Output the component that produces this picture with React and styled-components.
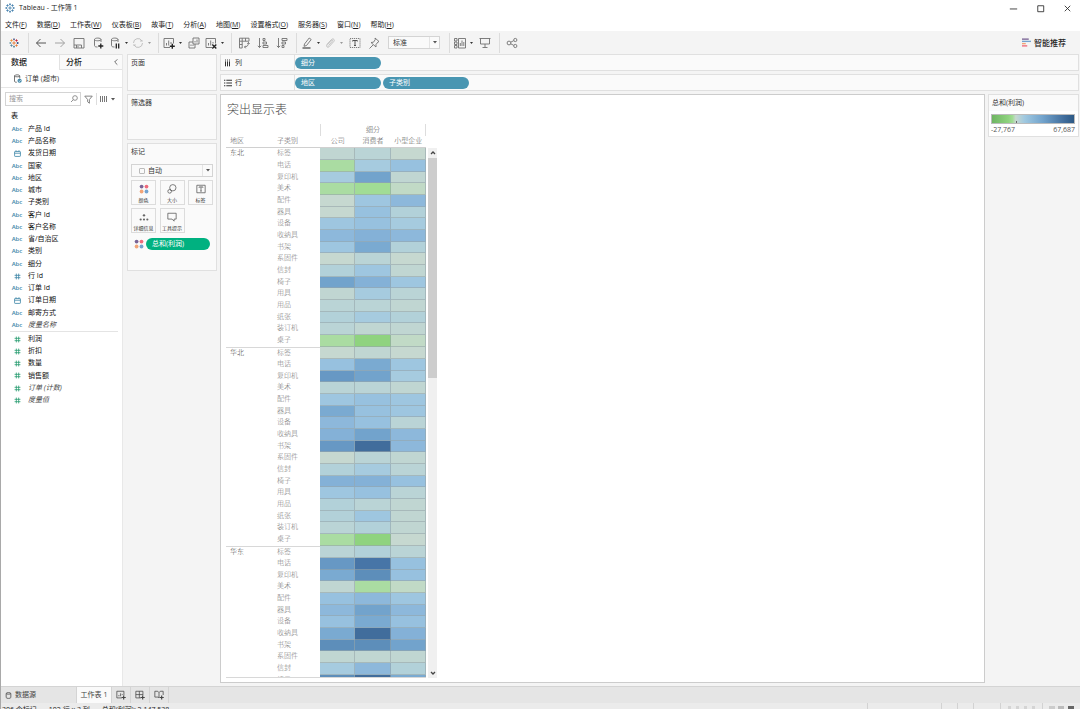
import { useState } from "react";
import styled, { createGlobalStyle, css } from "styled-components";

const GlobalStyle = createGlobalStyle`
    * {
        box-sizing: border-box;
    }

    body {
        margin: 0;
        background: #f4f4f4;
        color: #222;
        font-family: "Open Sans", "Noto Sans CJK SC", sans-serif;
        font-size: 7px;
        line-height: 12px;
    }

    button, input, select {
        background: none;
        border: 0;
        color: inherit;
        font: inherit;
        margin: 0;
        padding: 0;
    }

    h1, h2 {
        font: inherit;
        margin: 0;
    }

    svg {
        display: block;
        flex: none;
    }
`;

const Page = styled.div`
    border-left: 1px solid #a9a9a9;
    display: flex;
    flex-direction: column;
    height: 100vh;
    overflow: hidden;
`;

const TitleBar = styled.header`
    align-items: center;
    background: #fff;
    display: flex;
    gap: 4px;
    padding: 2px 7px 3px 4px;
`;

const WindowButtons = styled.div`
    display: flex;
    gap: 16px;
    margin-left: auto;
`;

const MenuBar = styled.nav`
    background: #fff;
    display: flex;
    gap: 10px;
    padding: 2px 4px 0;
`;

const Toolbar = styled.div`
    align-items: center;
    display: flex;
    height: 23px;
    padding: 0 14px 0 4px;
`;

const ToolButton = styled.button`
    align-items: center;
    color: ${(props) => (props.$faded ? "#bbb" : "#707070")};
    display: flex;
    flex: none;
    height: 18px;
    justify-content: center;
    margin-right: 1px;
    width: 18px;
`;

const DropButton = styled(ToolButton)`
    gap: 4px;
    justify-content: flex-start;
    margin: 0;
    padding-left: 1px;
    width: 23px;
`;

const ToolSeparator = styled.span`
    border-left: 1px solid #dcdcdc;
    height: 20px;
    margin: 0 3px 0 4px;
`;

const SelectWrap = styled.label`
    align-items: center;
    background: #fafafa;
    border: 1px solid #d4d4d4;
    color: #333;
    display: flex;
    height: 13px;
    position: relative;
    ${(props) => props.$toolbar && css`
        margin: 0 5px 0 4px;
        width: 52px;
    `}

    select {
        appearance: none;
        flex: 1;
        height: 11px;
        line-height: 10px;
        min-width: 0;
        outline: none;
        padding-left: ${(props) => (props.$toolbar ? "4px" : "16px")};
    }
`;

const SelectArrow = styled.span`
    align-items: center;
    border-left: 1px solid #e4e4e4;
    display: flex;
    height: 11px;
    justify-content: center;
    pointer-events: none;
    position: absolute;
    right: 0;
    width: 10px;
`;

const SelectMark = styled.span`
    border: 1px solid #bbb;
    border-radius: 1px;
    height: 6px;
    left: 7px;
    pointer-events: none;
    position: absolute;
    width: 6px;
`;

const ShowMe = styled.button`
    align-items: center;
    display: flex;
    font-size: 8px;
    font-weight: 500;
    gap: 3px;
    margin-left: auto;
`;

const Workspace = styled.div`
    display: flex;
    flex: 1;
    min-height: 0;
`;

const Sidebar = styled.aside`
    background: #fff;
    border-right: 1px solid #e8e8e8;
    flex: none;
    width: 122px;
`;

const SideTabs = styled.div`
    display: flex;
`;

const SideTab = styled.button`
    background: ${(props) => (props.$active ? "#fff" : "#fafafa")};
    border-bottom: 1px solid ${(props) => (props.$active ? "#fff" : "#e2e2e2")};
    border-left: 1px solid ${(props) => (props.$active ? "#fff" : "#e2e2e2")};
    border-top: 1px solid #e2e2e2;
    flex: ${(props) => (props.$active ? "none" : 1)};
    font-size: 8px;
    font-weight: 500;
    height: 16px;
    padding: ${(props) => (props.$active ? "0 0 0 9px" : "0 0 0 6px")};
    text-align: left;
    width: 58px;
`;

const CollapseButton = styled.button`
    align-items: center;
    background: #fafafa;
    border-bottom: 1px solid #e2e2e2;
    border-top: 1px solid #e2e2e2;
    color: #555;
    display: flex;
    justify-content: center;
    width: 12px;
`;

const DataSource = styled.div`
    align-items: center;
    border-bottom: 1px solid #e6e6e6;
    color: #333;
    display: flex;
    gap: 3px;
    height: 18px;
    padding-left: 12px;
`;

const SearchRow = styled.div`
    align-items: center;
    color: #777;
    display: flex;
    gap: 3px;
    padding: 4px 6px 4px 4px;
`;

const SearchBox = styled.label`
    align-items: center;
    border: 1px solid #d4d4d4;
    display: flex;
    height: 14px;
    padding: 0 2px 0 3px;
    width: 76px;

    input {
        flex: 1;
        min-width: 0;
        outline: none;
    }

    input::placeholder {
        color: #999;
    }
`;

const SmallButton = styled.button`
    align-items: center;
    display: flex;
    justify-content: center;

    & + & {
        border-left: 1px solid #ddd;
        height: 12px;
        padding-left: 3px;
    }
`;

const TableTitle = styled.h2`
    font-weight: 500;
    padding: 0 10px 1px;
`;

const FieldList = styled.ul`
    list-style: none;
    margin: 0 4px 0 9px;
    padding: 0;

    & + & {
        border-top: 1px solid #e4e4e4;
        padding-top: 1px;
    }
`;

const Field = styled.li`
    align-items: center;
    color: ${(props) => (props.$computed ? "#444" : "#111")};
    display: flex;
    font-style: ${(props) => (props.$computed ? "italic" : "normal")};
    height: 12px;

    &:nth-child(4n) {
        height: 13px;
    }
`;

const FieldType = styled.span`
    color: ${(props) => (props.$measure ? "#2a9d72" : "#3f87a8")};
    display: flex;
    font-size: 6px;
    font-style: normal;
    font-weight: 600;
    justify-content: center;
    margin-right: 4px;
    width: 14px;
`;

const Cards = styled.div`
    display: flex;
    flex: none;
    flex-direction: column;
    gap: 3px;
    margin: 0 3px 0 4px;
    width: 90px;
`;

const Card = styled.section`
    background: #fafafa;
    border: 1px solid #e0e0e0;
    color: #333;
    min-height: ${(props) => props.$min};
    padding: 2px 3px;
`;

const CardTitle = styled.h2`
    margin-bottom: 6px;
`;

const MarkGrid = styled.div`
    display: grid;
    gap: 3px;
    grid-template-columns: repeat(3, 25px);
    justify-content: space-between;
    padding: 3px 0;
`;

const MarkButton = styled.button`
    align-items: center;
    border: 1px solid #dcdcdc;
    display: flex;
    flex-direction: column;
    font-size: 5px;
    height: 25px;
    justify-content: space-between;
    line-height: 8px;
    padding-top: 3px;
    white-space: nowrap;
`;

const EncodingRow = styled.div`
    align-items: center;
    display: flex;
    gap: 2px;
    padding: 2px 3px;
`;

const Pill = styled.button`
    background: ${(props) => (props.$measure ? "#00b180" : "#4996b2")};
    border-radius: 6px;
    color: #fff;
    flex: ${(props) => (props.$measure ? "1" : "none")};
    height: 12px;
    padding-left: 6px;
    text-align: left;
    width: 86px;
`;

const Main = styled.main`
    display: flex;
    flex: 1;
    flex-direction: column;
    min-width: 0;
    padding: 0 1px 3px 0;
`;

const Shelf = styled.div`
    background: #fafafa;
    border: 1px solid #e0e0e0;
    display: flex;
    flex: none;
    height: 17px;
    margin-bottom: 3px;
`;

const ShelfName = styled.div`
    align-items: center;
    border-right: 1px solid #e0e0e0;
    color: #333;
    display: flex;
    gap: 3px;
    padding-left: 3px;
    width: 74px;
`;

const ShelfPills = styled.div`
    align-items: center;
    display: flex;
    gap: 2px;
`;

const ViewRow = styled.div`
    display: flex;
    flex: 1;
    gap: 3px;
    min-height: 0;
`;

const View = styled.section`
    background: #fff;
    border: 1px solid #ccc;
    display: flex;
    flex: 1;
    flex-direction: column;
    padding: 5px 5px 4px;
`;

const ViewTitle = styled.h1`
    color: #444;
    font-family: "Liberation Serif", "Noto Sans CJK SC", serif;
    font-size: 12px;
    font-weight: 300;
    line-height: 20px;
    padding-left: 1px;
`;

const ChartArea = styled.div`
    align-items: flex-end;
    display: flex;
    flex: 1;
    gap: 1px;
    min-height: 0;
    padding-top: 4px;
`;

const TableClip = styled.div`
    align-self: stretch;
    border-bottom: 1px solid #d8d8d8;
    overflow: hidden;
`;

const HeatTable = styled.table`
    border-collapse: separate;
    border-spacing: 0;
    color: #777;
    font-family: "Liberation Serif", "Noto Sans CJK SC", serif;
    font-weight: 300;
    line-height: 11px;
    table-layout: fixed;
    width: 200px;

    th {
        font-weight: 300;
        padding: 0;
        text-align: left;
        vertical-align: top;
    }

    thead th {
        color: #555;
        height: 12px;
        text-align: center;
        vertical-align: bottom;
    }

    thead th[scope="col"] {
        border-bottom: 1px solid #d0d0d0;
    }

    tbody tr {
        height: 12px;
    }

    tbody tr:nth-child(3n) {
        height: 11px;
    }

    tbody + tbody tr:first-child th {
        border-top: 1px solid #d8d8d8;
    }
`;

const GroupHead = styled.th`
    border-left: 1px solid #ddd;
    border-right: 1px solid #ddd;
`;

const RowHead = styled.th`
    padding-left: ${(props) => (props.$region ? "4px" : "1px")} !important;
    text-align: left !important;
    ${(props) => props.$region && "color: #444;"}
`;

const HeatCell = styled.td`
    background: ${(props) => props.$color};
    border-bottom: 1px solid rgba(150, 165, 170, 0.6);
    border-right: 1px solid rgba(150, 165, 170, 0.6);
    padding: 0;
`;

const ScrollTrack = styled.div`
    align-items: center;
    background: #f0f0f0;
    color: #444;
    display: flex;
    flex-direction: column;
    height: calc(100% - 24px);
    justify-content: space-between;
    margin-left: 1px;
    width: 9px;
`;

const ScrollArrow = styled.button`
    align-items: center;
    display: flex;
    height: 10px;
    justify-content: center;
    width: 9px;
`;

const ScrollThumb = styled.div`
    background: #cdcdcd;
    height: 220px;
    margin-bottom: auto;
    width: 9px;
`;

const Legend = styled.aside`
    align-self: flex-start;
    background: #fff;
    border: 1px solid #e0e0e0;
    color: #555;
    width: 91px;
`;

const LegendTitle = styled.h2`
    background: #fafafa;
    color: #333;
    line-height: 16px;
    padding-left: 3px;
`;

const LegendRamp = styled.div`
    background: linear-gradient(90deg, #6fb562, #8fd37f 20%, #a1dc95 25%, #c7d8d0 29%, #9fc8e0 40%, #72a3cc 62%, #416d9c 88%, #2c5985);
    border: 1px solid #bbb;
    height: 10px;
    margin: 3px 3px 0 2px;
    padding: 6px 0 0 24px;

    &::after {
        background: #666;
        content: "";
        display: block;
        height: 2px;
        width: 1px;
    }
`;

const LegendEnds = styled.div`
    display: flex;
    justify-content: space-between;
    padding: 0 3px 0 2px;
`;

const SheetTabs = styled.footer`
    background: #e5e5e5;
    border-top: 1px solid #d4d4d4;
    color: #444;
    display: flex;
    flex: none;
    height: 17px;
`;

const SheetTab = styled.button`
    align-items: center;
    background: ${(props) => (props.$active ? "#fafafa" : "transparent")};
    border-right: 1px solid #d4d4d4;
    display: flex;
    gap: 3px;
    justify-content: ${(props) => (props.$wide ? "flex-start" : "center")};
    padding-left: ${(props) => (props.$wide ? "4px" : "0")};
    width: ${(props) => (props.$wide ? "76px" : props.$active ? "35px" : "19px")};
`;

const StatusBar = styled.div`
    background: #ebebeb;
    color: #222;
    display: flex;
    flex: none;
    gap: 12px;
    height: 6px;
    overflow: hidden;
    padding-left: 1px;

    span {
        padding-top: 1px;
        white-space: pre;
    }
`;

const StatusTools = styled.div`
    display: flex;
    margin-left: auto;
`;

const StatusCell = styled.div`
    align-items: flex-end;
    border-left: 1px solid #d2d2d2;
    display: flex;
    justify-content: space-around;
    padding: 0 4px;
    width: ${(props) => props.$width};
`;

const StatusMark = styled.i`
    background: ${(props) => props.$color};
    height: 3px;
    width: ${(props) => props.$width};
`;

// Shade steps from loss (green) to high profit (dark blue)
const SHADES = {
    a: "#8fd37f", b: "#a1dc95", c: "#aadca2", d: "#c1dac6", e: "#c6d8d0",
    f: "#c0d6d2", g: "#bad4d6", h: "#b2d1d9", i: "#a6cbdf", j: "#9ec6e0",
    k: "#97c1df", l: "#8db8db", m: "#84b1d7", n: "#7aaad1", o: "#72a3cc",
    p: "#6798c4", q: "#5d8eba", r: "#4775a7", s: "#416d9c",
};

const CATEGORIES = [
    "标签", "电话", "复印机", "美术", "配件", "器具", "设备", "收纳具", "书架",
    "系固件", "信封", "椅子", "用具", "用品", "纸张", "装订机", "桌子",
];

const REGIONS = [
    { name: "东北", shades: "fge cik iof cbd ejl ekh jki lml jnh ege hjf omj fig ggf hih gff cad" },
    { name: "华北", shades: "efe knj poi ggf jkj nkj lkg mol psl egf hig mmk jkg hgf hjf ghf cae" },
    { name: "华东", shades: "ghg prk nqk fcd klj lol knk nsm qqo fff ilh qsn" },
];

const MENUS = [
    ["文件", "F"], ["数据", "D"], ["工作表", "W"], ["仪表板", "B"], ["故事", "T"], ["分析", "A"],
    ["地图", "M"], ["设置格式", "O"], ["服务器", "S"], ["窗口", "N"], ["帮助", "H"],
];

const DIMENSIONS = [
    { name: "产品 Id" }, { name: "产品名称" }, { name: "发货日期", type: "date" }, { name: "国家" },
    { name: "地区" }, { name: "城市" }, { name: "子类别" }, { name: "客户 Id" }, { name: "客户名称" },
    { name: "省/自治区" }, { name: "类别" }, { name: "细分" }, { name: "行 Id", type: "number" },
    { name: "订单 Id" }, { name: "订单日期", type: "date" }, { name: "邮寄方式" },
    { name: "度量名称", computed: true },
];

const MEASURES = [
    { name: "利润" }, { name: "折扣" }, { name: "数量" }, { name: "销售额" },
    { name: "订单 (计数)", computed: true }, { name: "度量值", computed: true },
];

const Icon = ({ size = 12, children, ...rest }) => (
    <svg width={size} height={size} viewBox="0 0 12 12" fill="none" stroke="currentColor" strokeWidth="0.9" aria-hidden="true" {...rest}>
        {children}
    </svg>
);

const Logo = ({ size, colorful }) => {
    const colors = colorful
        ? ["#e8762d", "#5b6591", "#59879b", "#7199a6", "#1f447e", "#eb912c", "#c72037", "#5b879b", "#e8762d"]
        : Array(9).fill("#4a84b0");
    const spots = [[6, 6, 2], [6, 1.6, 1.2], [6, 10.4, 1.2], [1.6, 6, 1.2], [10.4, 6, 1.2], [3, 3, 1.4], [9, 3, 1.4], [3, 9, 1.4], [9, 9, 1.4]];
    return (
        <Icon size={size} strokeWidth="1.1">
            {spots.map(([x, y, r], i) => (
                <path key={i} d={`M${x - r} ${y}h${2 * r}M${x} ${y - r}v${2 * r}`} stroke={colors[i]} />
            ))}
        </Icon>
    );
};

const Caret = () => (
    <svg width="4" height="3" viewBox="0 0 4 3" aria-hidden="true"><path d="M0 0h4L2 2.6z" fill="#555" /></svg>
);

const Dots = ({ size = 10 }) => (
    <svg width={size} height={size} viewBox="0 0 10 10" aria-hidden="true">
        <circle cx="2.6" cy="2.6" r="1.9" fill="#7a6496" />
        <circle cx="7.5" cy="2.6" r="1.9" fill="#ee6a7c" />
        <circle cx="2.6" cy="7.5" r="1.9" fill="#f2a477" />
        <circle cx="7.5" cy="7.5" r="1.9" fill="#74a3cf" />
    </svg>
);

const Calendar = () => (
    <Icon size={7} strokeWidth="1.4"><rect x="1" y="2.5" width="10" height="8.5" rx="1" /><path d="M1 5.5h10M3.5 .5v2M8.5 .5v2" /></Icon>
);

const Hash = () => (
    <Icon size={7} strokeWidth="1.4"><path d="M4 1v10M8 1v10M1 4h10M1 8h10" /></Icon>
);

const PATHS = {
    back: <path d="M11 6H1.5M5.5 2 1.5 6l4 4" stroke="#444" />,
    forward: <path d="M1 6h9.500M6.500 2l4 4-4 4" stroke="#999" />,
    save: <><path d="M1 1.500h10v9.500H1z" /><path d="M3.500 11V8h5v3M1 8h2.500M5 9v1.500" /></>,
    addData: <><path d="M9 5V2.500C9 .6 2.500 .6 2.500 2.500v6c0 1 1 1.500 3 1.500M2.500 2.500c0 1.700 6.500 1.700 6.500 0" /><path d="M8.800 6.500v5M6.300 9h5" stroke="#222" strokeWidth="1.300" /></>,
    pauseData: <><path d="M9 5V2.500C9 .6 2.500 .6 2.500 2.500v6c0 1 1 1.500 3 1.500M2.500 2.500c0 1.700 6.500 1.700 6.500 0" /><path d="M7.300 6.500v5M9.700 6.500v5" stroke="#222" strokeWidth="1.300" /></>,
    refresh: <path d="M1.500 6a4.500 4.500 0 0 1 8.500-2M10.500 6A4.500 4.500 0 0 1 2 8M8 4h2.800M1 8h2.800" />,
    newSheet: <><path d="M7 10.500H1v-9h9.500v5" /><path d="M3.500 8.500V6M5.700 8.500V3.500M8 7V5" /><path d="M9.300 6.700v5M6.800 9.200h5" stroke="#222" strokeWidth="1.400" /></>,
    duplicate: <><path d="M5 1h6v6H5z" /><path d="M5 5H1v6h6V7M3 9V7.500M5 9V7.500M7 5.500V4M9 5.500V2.500" /></>,
    clearSheet: <><path d="M7 10.500H1v-9h9.500v5" /><path d="M3.500 8.500V6M5.700 8.500V3.500M8 6.500V5" /><path d="m7.300 7.500 4 4M11.300 7.500l-4 4" stroke="#222" strokeWidth="1.400" /></>,
    swap: <path d="M1.500 1.200H11v3H4.200V11H1.500zM4.200 1.200v3H1.500M7.500 1.200v3M1.500 7.500h2.700M10.500 5.500c0 3-1.500 4.500-4 4.500M9.200 6.700l1.300-1.200 1.200 1.400M7.700 8.700 6.500 10l1.200 1.300" />,
    sortAsc: <path d="M2.500 1v9.500M.8 8.800l1.700 1.700 1.700-1.700M6 1.500h2v2H6zM6 5h3.500v2H6zM6 8.500h5v2H6z" />,
    sortDesc: <path d="M2.500 1v9.500M.8 8.800l1.700 1.700 1.700-1.700M6 1.500h5v2H6zM6 5h3.500v2H6zM6 8.500h2v2H6z" />,
    pen: <><path d="m3.500 7 4.700-6 2 1.500L5.500 8.500 3 9.300z" /><path d="M1.500 11h8" stroke="#444" strokeWidth="1.200" /></>,
    clip: <path d="m3 7.500 4.500-5c1.700-1.600 3.700.4 2.300 2L5 9.800c-1.300 1.300-3.300-.4-2-2l4.300-4.600c1-.8 1.800.2 1 1L4.500 8.500" />,
    label: <><path d="M1 1.500h10v9H1z" strokeDasharray="1.200 .8" /><path d="M3.700 4.500v-1h4.600v1M6 3.500v5M5 8.500h2" stroke="#444" /></>,
    pin: <path d="m7 1 4 3.500-1 .5-2 2.500V10L3 5.500l2.500-.3L7.300 2.500zM5 8l-3.500 3.500" />,
    cards: <path d="M.5 1.500H3V4H.5zM.5 5H3v2.500H.5zM.5 8.500H3V11H.5zM4.500 1.500h7V11h-7zM6.300 9V6M8 9V3.500M9.800 9V5" />,
    present: <path d="M.5 1.500h11M1.500 1.500v5.500h9V1.500M6 7v3.500M3.500 10.500h5" />,
    share: <><circle cx="3" cy="6" r="1.900" /><circle cx="9.300" cy="3" r="1.600" /><circle cx="9.300" cy="9" r="1.600" /><path d="m4.700 5.200 3-1.500M4.700 6.800l3 1.500" /></>,
};

const Tool = ({ name, label, faded }) => (
    <ToolButton aria-label={label} $faded={faded}><Icon>{PATHS[name]}</Icon></ToolButton>
);

const DropTool = ({ name, label, faded }) => (
    <DropButton aria-label={label} $faded={faded}>
        <Icon>{PATHS[name]}</Icon>
        <svg width="3" height="2" aria-hidden="true"><path d="M0 0h3L1.500 2z" fill={faded ? "#999" : "#333"} /></svg>
    </DropButton>
);

const FieldRow = ({ field, measure }) => (
    <Field $computed={field.computed}>
        <FieldType $measure={measure}>
            {field.type === "date" && <Calendar />}
            {(measure || field.type === "number") && <Hash />}
            {!measure && !field.type && "Abc"}
        </FieldType>
        {field.name}
    </Field>
);

const WindowButton = ({ label, children }) => (
    <button aria-label={label}><Icon size={11} stroke="#222">{children}</Icon></button>
);

const MarksCard = () => {
    const [mark, setMark] = useState("auto");

    return (
        <Card $min="128px">
            <CardTitle>标记</CardTitle>
            <SelectWrap>
                <SelectMark />
                <select aria-label="标记类型" value={mark} onChange={(e) => setMark(e.target.value)}>
                    <option value="auto">自动</option>
                </select>
                <SelectArrow><Caret /></SelectArrow>
            </SelectWrap>
            <MarkGrid>
                <MarkButton><Dots />颜色</MarkButton>
                <MarkButton>
                    <Icon size={10} stroke="#555"><circle cx="7" cy="4.500" r="3.800" /><circle cx="3.200" cy="8.800" r="2.200" /></Icon>
                    大小
                </MarkButton>
                <MarkButton>
                    <Icon size={10} stroke="#555"><path d="M1 1.500h10v9H1zM3.700 4.500v-1h4.600v1M6 3.500v5M5 8.500h2" /></Icon>
                    标签
                </MarkButton>
                <MarkButton>
                    <Icon size={10} stroke="none" fill="#666">
                        <circle cx="6" cy="4" r="1.400" /><circle cx="2" cy="9" r="1.300" /><circle cx="6" cy="9" r="1.300" /><circle cx="10" cy="9" r="1.300" />
                    </Icon>
                    详细信息
                </MarkButton>
                <MarkButton>
                    <Icon size={10} stroke="#555"><path d="M1 1.500h10v7H8.500v2.500L6 8.500H1z" /></Icon>
                    工具提示
                </MarkButton>
            </MarkGrid>
            <EncodingRow>
                <Dots />
                <Pill $measure>总和(利润)</Pill>
            </EncodingRow>
        </Card>
    );
};

const HighlightTable = () => (
    <HeatTable>
        <colgroup>
            <col style={{ width: 50 }} />
            <col style={{ width: 44 }} />
            <col /><col /><col />
        </colgroup>
        <thead>
            <tr>
                <th colSpan={2} />
                <GroupHead colSpan={3}>细分</GroupHead>
            </tr>
            <tr>
                <RowHead scope="col" $region>地区</RowHead>
                <RowHead scope="col">子类别</RowHead>
                <th scope="col">公司</th>
                <th scope="col">消费者</th>
                <th scope="col">小型企业</th>
            </tr>
        </thead>
        {REGIONS.map((region) => {
            const rows = region.shades.split(" ");
            return (
                <tbody key={region.name}>
                    {rows.map((row, i) => (
                        <tr key={CATEGORIES[i]}>
                            {i === 0 && <RowHead scope="rowgroup" rowSpan={rows.length} $region>{region.name}</RowHead>}
                            <RowHead scope="row">{CATEGORIES[i]}</RowHead>
                            {row.split("").map((shade, j) => (
                                <HeatCell key={j} $color={SHADES[shade]} />
                            ))}
                        </tr>
                    ))}
                </tbody>
            );
        })}
    </HeatTable>
);

export default function App() {
    const [search, setSearch] = useState("");
    const [fit, setFit] = useState("standard");

    return (
        <Page>
            <GlobalStyle />
            <TitleBar>
                <Logo size={10} />
                Tableau - 工作簿 1
                <WindowButtons>
                    <WindowButton label="最小化"><path d="M2 6.500h8" /></WindowButton>
                    <WindowButton label="最大化"><path d="M3 3h6.500v6.500H3z" /></WindowButton>
                    <WindowButton label="关闭"><path d="m3 3 6 6M9 3 3 9" /></WindowButton>
                </WindowButtons>
            </TitleBar>
            <MenuBar>
                {MENUS.map(([name, key]) => (
                    <button key={key}>{name}(<u>{key}</u>)</button>
                ))}
            </MenuBar>
            <Toolbar>
                <ToolButton aria-label="开始"><Logo size={10} colorful /></ToolButton>
                <ToolSeparator />
                <Tool name="back" label="撤消" />
                <Tool name="forward" label="重做" />
                <Tool name="save" label="保存" />
                <Tool name="addData" label="新建数据源" />
                <DropTool name="pauseData" label="暂停自动更新" />
                <DropTool name="refresh" label="运行更新" faded />
                <ToolSeparator />
                <DropTool name="newSheet" label="新建工作表" />
                <Tool name="duplicate" label="复制" />
                <DropTool name="clearSheet" label="清除工作表" />
                <ToolSeparator />
                <Tool name="swap" label="交换行和列" />
                <Tool name="sortAsc" label="升序排序" />
                <Tool name="sortDesc" label="降序排序" />
                <ToolSeparator />
                <DropTool name="pen" label="突出显示" />
                <DropTool name="clip" label="组成员" faded />
                <Tool name="label" label="显示标记标签" />
                <Tool name="pin" label="固定轴" />
                <SelectWrap $toolbar>
                    <select aria-label="适合" value={fit} onChange={(e) => setFit(e.target.value)}>
                        <option value="standard">标准</option>
                    </select>
                    <SelectArrow><Caret /></SelectArrow>
                </SelectWrap>
                <ToolSeparator />
                <DropTool name="cards" label="显示/隐藏卡" />
                <Tool name="present" label="演示模式" />
                <ToolSeparator />
                <Tool name="share" label="共享" />
                <ShowMe>
                    <Icon size={9} strokeWidth="1.800">
                        <path d="M0 1.500h9" stroke="#7a6496" /><path d="M0 4.500h12" stroke="#74a3cf" />
                        <path d="M0 7.500h5" stroke="#f2a477" /><path d="M0 10.500h7" stroke="#ee6a7c" />
                    </Icon>
                    智能推荐
                </ShowMe>
            </Toolbar>
            <Workspace>
                <Sidebar>
                    <SideTabs>
                        <SideTab $active>数据</SideTab>
                        <SideTab>分析</SideTab>
                        <CollapseButton aria-label="折叠"><Icon size={8} strokeWidth="1.300"><path d="M8 2 4 6l4 4" /></Icon></CollapseButton>
                    </SideTabs>
                    <DataSource>
                        <Icon size={9}>
                            <path d="M9 6V2.500C9 .6 2 .6 2 2.500v7c0 1 1 1.500 3 1.500M2 2.500c0 1.700 7 1.700 7 0" />
                            <circle cx="8.800" cy="9" r="2.800" fill="#3f87a8" stroke="none" /><path d="m7.500 9 1 1 1.800-2" stroke="#fff" />
                        </Icon>
                        订单 (超市)
                    </DataSource>
                    <SearchRow>
                        <SearchBox>
                            <input placeholder="搜索" aria-label="搜索" value={search} onChange={(e) => setSearch(e.target.value)} />
                            <Icon size={8} strokeWidth="1.200"><circle cx="7.500" cy="4.500" r="3.500" /><path d="M5 7 1.500 10.500" /></Icon>
                        </SearchBox>
                        <SmallButton aria-label="筛选"><Icon size={9} strokeWidth="1.200"><path d="M1 1.500h10L7.200 6v5L4.800 9V6z" /></Icon></SmallButton>
                        <SmallButton aria-label="查看方式">
                            <Icon size={8} strokeWidth="1.500"><path d="M.75 1.500v9M3.750 1.500v9M6.750 1.500v9M9.750 1.500v9" /></Icon>
                        </SmallButton>
                        <Caret />
                    </SearchRow>
                    <TableTitle>表</TableTitle>
                    <FieldList>
                        {DIMENSIONS.map((field) => <FieldRow key={field.name} field={field} />)}
                    </FieldList>
                    <FieldList>
                        {MEASURES.map((field) => <FieldRow key={field.name} field={field} measure />)}
                    </FieldList>
                </Sidebar>
                <Cards>
                    <Card $min="37px">页面</Card>
                    <Card $min="46px">筛选器</Card>
                    <MarksCard />
                </Cards>
                <Main>
                    <Shelf>
                        <ShelfName><Icon size={8} strokeWidth="1.500"><path d="M2.250 3.500V11M5.250 3.500V11M8.250 3.500V11M2.250 .8v1.500M5.250 .8v1.500M8.250 .8v1.500" /></Icon>列</ShelfName>
                        <ShelfPills><Pill>细分</Pill></ShelfPills>
                    </Shelf>
                    <Shelf>
                        <ShelfName><Icon size={8} strokeWidth="1.600"><path d="M3.500 2H12M3.500 6H12M3.500 10H12M0 2h2M0 6h2M0 10h2" /></Icon>行</ShelfName>
                        <ShelfPills><Pill>地区</Pill><Pill>子类别</Pill></ShelfPills>
                    </Shelf>
                    <ViewRow>
                        <View>
                            <ViewTitle>突出显示表</ViewTitle>
                            <ChartArea>
                                <TableClip><HighlightTable /></TableClip>
                                <ScrollTrack>
                                    <ScrollArrow aria-label="向上滚动"><Icon size={6} strokeWidth="2.600"><path d="m2 8 4-4 4 4" /></Icon></ScrollArrow>
                                    <ScrollThumb />
                                    <ScrollArrow aria-label="向下滚动"><Icon size={6} strokeWidth="2.600"><path d="m2 4 4 4 4-4" /></Icon></ScrollArrow>
                                </ScrollTrack>
                            </ChartArea>
                        </View>
                        <Legend>
                            <LegendTitle>总和(利润)</LegendTitle>
                            <LegendRamp />
                            <LegendEnds><span>-27,767</span><span>67,687</span></LegendEnds>
                        </Legend>
                    </ViewRow>
                </Main>
            </Workspace>
            <SheetTabs>
                <SheetTab $wide>
                    <Icon size={7} strokeWidth="1.300"><path d="M2 2.500C2 .5 10 .5 10 2.500v7c0 2-8 2-8 0zM2 2.500c0 1.700 8 1.700 8 0" /></Icon>
                    数据源
                </SheetTab>
                <SheetTab $active>工作表 1</SheetTab>
                <SheetTab aria-label="新建工作表">
                    <Icon size={10}><path d="M7 9.500H1v-8h8.500v5M3.500 7.500V6M5.500 7.500V4M7.500 6V5" /><path d="M9.200 6.500v5M6.700 9h5" strokeWidth="1.400" /></Icon>
                </SheetTab>
                <SheetTab aria-label="新建仪表板">
                    <Icon size={10}><path d="M7 9.500H1v-8h8.500v5M5.200 1.500v8M1 5.500h8.500" /><path d="M9.200 6.500v5M6.700 9h5" strokeWidth="1.400" /></Icon>
                </SheetTab>
                <SheetTab aria-label="新建故事">
                    <Icon size={10}><path d="M6 9.500 5 8.500H1v-7h3.500L6 3l1.500-1.500H11V6M6 3v6.500" /><path d="M9.200 6.500v5M6.700 9h5" strokeWidth="1.400" /></Icon>
                </SheetTab>
            </SheetTabs>
            <StatusBar>
                <span>306 个标记</span>
                <span>102 行 x 3 列</span>
                <span>总和(利润): 2,147,538</span>
                <StatusTools>
                    <StatusCell $width="74px" />
                    <StatusCell $width="16px" />
                    <StatusCell $width="16px" />
                    <StatusCell $width="27px" />
                    <StatusCell $width="42px">
                        {[1, 2, 3, 4].map((n) => <StatusMark key={n} $width="3px" $color="#d4d4d4" />)}
                    </StatusCell>
                    <StatusCell $width="38px">
                        <StatusMark $width="6px" $color="#ccc" />
                        <StatusMark $width="6px" $color="#bbb" />
                        <StatusMark $width="6px" $color="#666" />
                    </StatusCell>
                </StatusTools>
            </StatusBar>
        </Page>
    );
}
